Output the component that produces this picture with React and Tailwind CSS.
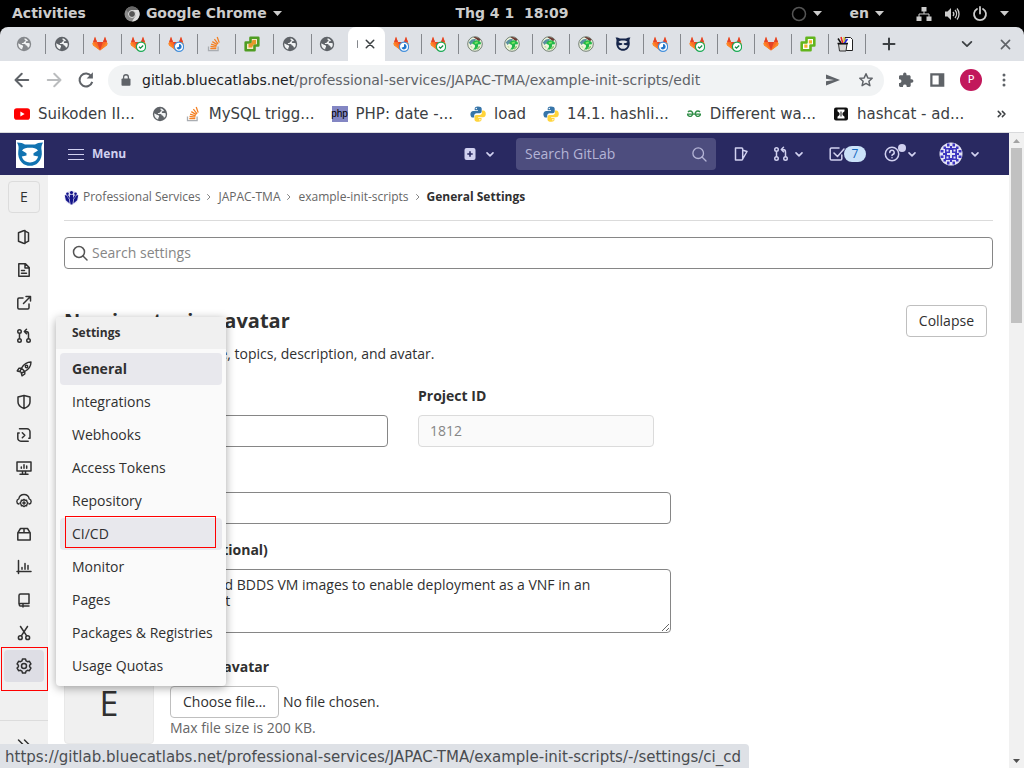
import React from "react";

const UI = "font-['Open_Sans','Noto_Sans',sans-serif]";
const SYS = "font-['DejaVu_Sans',sans-serif]";

/* ---------- small drawings ---------- */

function Svg({ size = 16, children, className = "", box = "0 0 16 16" }) {
  return (
    <svg width={size} height={size} viewBox={box} fill="none" className={`shrink-0 ${className}`} aria-hidden="true">
      {children}
    </svg>
  );
}

function Line({ d, children, size = 16, className = "", w = 1.5 }) {
  return (
    <Svg size={size} className={className}>
      <g stroke="currentColor" strokeWidth={w} strokeLinejoin="round" strokeLinecap="round">
        {d && <path d={d} />}
        {children}
      </g>
    </Svg>
  );
}

const Caret = () => (
  <svg width="9" height="5" viewBox="0 0 9 5" className="shrink-0" aria-hidden="true">
    <path d="M0 0h9L4.500 5z" fill="currentColor" />
  </svg>
);

const Chevron = () => <Line size={12} w={2.200} d="M4 6.500l4 4 4-4" />;

const Globe = ({ light }) => (
  <Svg>
    <circle cx="8" cy="8" r="7.200" fill={light ? "#85888c" : "#5f6368"} />
    <path
      d="M8.800 2.200c-.8.900-.4 1.700.6 1.700.3.800-.2 1.700-1.200 1.800-.2.900-.8 1.300-2 1.300l-.5.900h2.600c1.200 0 1.500 1 1.500 1.600 1.300 0 1.900.5 1.700 1.700l1.200.3A5.800 5.800 0 0 0 13.800 7.500l-1.300-.6-2.300.2c-.6-.7-.4-1.500.3-1.900l1.700-.3A5.800 5.800 0 0 0 8.800 2.200z M2.300 7.200l2.600 1.500c1.200.3 2.200.6 2.200 1.900 0 .9-.8 1-.8 1.900l-.2.900A5.800 5.800 0 0 1 2.300 7.200z"
      fill="#f1f3f4"
    />
  </Svg>
);

const Fox = () => (
  <>
    <path d="M8 14.500 1 9.300.6 7.500 3 .8l2 5.200h6l2-5.200 2.400 6.700-.4 1.800z" fill="#fc6d26" />
    <path d="M8 14.500 5 6h6z" fill="#e24329" />
    <path d="M8 14.500 1 9.300l-.4-1.800L1.200 6z" fill="#fc8a26" />
    <path d="M8 14.500l7-5.200.4-1.800L14.800 6z" fill="#fc8a26" />
    <path d="M3 .8 5 6H1.200zM13 .8l2 5.200h-4z" fill="#e24329" />
  </>
);

const FoxIcon = () => <Svg><Fox /></Svg>;
const FoxPassed = () => (
  <Svg>
    <Fox />
    <circle cx="11" cy="10.700" r="4.600" fill="#fff" stroke="#1aaa55" strokeWidth="1.200" />
    <path d="M9 10.700l1.500 1.500L13.200 9.500" stroke="#168f48" strokeWidth="1.300" />
  </Svg>
);
const FoxRunning = () => (
  <Svg>
    <Fox />
    <circle cx="11" cy="10.700" r="4.600" fill="#fff" stroke="#428fdc" strokeWidth="1.200" />
    <path d="M11 8a2.700 2.700 0 1 1-2.500 3.800L11 10.700z" fill="#1f75cb" />
  </Svg>
);
const StackIcon = () => (
  <Svg>
    <path d="M2.500 10.500v4.200h9.600v-4.200" stroke="#a9adb2" strokeWidth="1.300" />
    <path d="M4.300 12.600h6M4.500 10.500l5.900.7M5.100 8.200l5.600 1.700M6.300 5.600l5 3M8.400 3.200l3.700 4.600M11.200 1l2 5.600" stroke="#f48024" strokeWidth="1.300" />
  </Svg>
);
const GreenRing = ({ dark }) => (
  <Svg>
    <path
      d="M6.500 1.700h7.800v7.800h-3.800v4.800H1.700V6.500h4.800z"
      fill={dark ? "#f4e8c8" : "#fff"}
      stroke={dark ? "#4f9d22" : "#62b51c"}
      strokeWidth="2.600"
      strokeLinejoin="round"
    />
    {dark ? (
      <path d="M8.500 4H12v4L9.500 8.500 8 11.500H4.500V8l3-1z" fill="#e8962a" />
    ) : (
      <path d="M8.800 4.300H12v3.200H8.800zM4.300 8.500h3.200v3.200H4.300z" fill="#f7b32b" />
    )}
  </Svg>
);
const Dragon = () => (
  <Svg>
    <circle cx="8" cy="8" r="7.300" fill="#eef4dc" stroke="#68756a" strokeWidth=".9" />
    <path d="M1.800 6.500C4 3.500 6 2.500 9 3.200L7.500 5.500 5 7.500 3.500 9z" fill="#5c8fa0" />
    <path d="M6.500 1.200c2.500-.6 5.300.3 7 2.600L12 5.200 9 3z" fill="#6b3a34" />
    <path d="M5 7.500c1.500-2.500 3.500-3.700 6-3s3.200 2.200 2.900 3.700l-2.900.3c.5 2-.3 3.700-2.200 4.900l-3 .1c2-1.300 2.700-3 2-4.500z" fill="#22b84a" />
    <path d="M7.500 6.400l3-.9.5 1.800-3 .8z" fill="#7ee65f" />
    <path d="M9.800 11.500l3.500-2-.8 2.500-2.500 1.800z" fill="#8ac870" />
    <path d="M3 10.500l2-.5.5 2.500z" fill="#c6dba0" />
  </Svg>
);

const CAT_HEAD = "M1 2.500c4 0 6 .8 8 2h10c2-1.200 4-2 8-2-1.800 3.200-2 5-1.300 8.500.6 4.500-.6 8.500-3.700 11.700-4.200 4.200-11.800 4.200-16 0C2.900 19.500 1.700 15.500 2.300 11 3 7.500 2.800 5.700 1 2.500z";
const CAT_FACE = "M6 10.500C7.800 8.200 10.500 7.800 14 7.800s6.200.4 8 2.700l-4.500 2.700v2.400l4.700 1C20.700 20.700 18 22.500 14 22.500s-6.700-1.800-8.200-5.900l4.700-1v-2.400z";

const CatDark = () => (
  <Svg box="0 0 28 28">
    <path d={CAT_HEAD} fill="#16254a" />
    <path d={CAT_FACE} fill="#dee1e6" />
    <path d="M8 12.500h12v3H8z" fill="#16254a" />
    <path d="M12.500 11h3v6h-3z" fill="#dee1e6" />
  </Svg>
);
const PaintBucket = () => (
  <Svg>
    <path d="M8 1.500h5.500l2 2v11H8z" fill="#fff" stroke="#222" />
    <path d="M1.500 8h8.500l-1 7H2.500z" fill="#d6d6d6" stroke="#333" />
    <path d="M.5 7.500h10.500" stroke="#111" strokeWidth="1.500" />
    <path d="M1 2.500l3 4.500" stroke="#111" strokeWidth="1.500" />
    <path d="M4 1l1.700 6" stroke="#e22" strokeWidth="1.500" />
    <path d="M10.500 3L7.500 7" stroke="#22d" strokeWidth="1.500" />
    <path d="M7 1v5" stroke="#e8c71c" strokeWidth="1.300" />
  </Svg>
);
const Python = () => {
  const half = "M7.900.5C5.200.5 4.700 1.600 4.700 2.800v1.500H8v.6H3.200C1.500 4.900.4 6.200.4 8.200s1 3.400 2.500 3.400h1.300V9.700c0-1.300 1-2.400 2.400-2.400h3.200c1.100 0 1.900-.9 1.900-2V2.800C11.700 1.300 10.300.5 7.900.5z";
  return (
    <Svg>
      <path d={half} fill="#3775a9" />
      <path d={half} fill="#ffd43b" transform="rotate(180 8.100 8.100)" />
      <circle cx="6.300" cy="2.500" r=".7" fill="#fff" />
      <circle cx="9.900" cy="13.700" r=".7" fill="#fff" />
    </Svg>
  );
};
const YouTube = () => (
  <Svg>
    <rect x="0" y="2.300" width="16" height="11.400" rx="2.800" fill="#f00" />
    <path d="M6.400 5.600v4.800L10.600 8z" fill="#fff" />
  </Svg>
);
const Php = () => (
  <span className="flex h-4 w-4 shrink-0 items-center justify-center bg-[#8386c3] font-['Liberation_Sans',sans-serif] text-[10px] leading-3 text-black">php</span>
);
const Geeks = () => (
  <Svg>
    <path d="M1 8.200h14M2 6a2.700 2.700 0 1 1-.5 2.500M14 6a2.700 2.700 0 1 0 .5 2.500" stroke="#2f8d46" strokeWidth="1.300" />
  </Svg>
);
const Hashcat = () => (
  <Svg>
    <rect x="1" y="1.500" width="14" height="13" rx="2" fill="#111" />
    <path d="M4.500 3.500h7v1.800L9.500 7v2l2 1.700v1.800h-7v-1.800L6.500 9V7l-2-1.700z" fill="#fff" />
    <path d="M8 5.500v5" stroke="#111" />
  </Svg>
);

/* ---------- desktop bar ---------- */

function DesktopBar() {
  return (
    <div className={`${SYS} grid h-[27px] shrink-0 grid-cols-[1fr_auto_1fr] items-center bg-black px-3 text-[14px] font-bold text-[#ccc]`}>
      <div className="flex items-center gap-[38px]">
        <button className="font-bold">Activities</button>
        <button className="flex items-center gap-1.5 font-bold">
          <Svg>
            <circle cx="8" cy="8" r="7.500" fill="#8b8b8b" />
            <path d="M8 4h6.500A7.500 7.500 0 0 1 8 15.500L11.500 10z" fill="#ddd" />
            <path d="M8 .5A7.500 7.500 0 0 1 14.500 4H8a4 4 0 0 0-3.700 2.500L2 3.800A7.500 7.500 0 0 1 8 .5z" fill="#666" />
            <circle cx="8" cy="8" r="3.500" fill="#555" stroke="#ddd" />
          </Svg>
          <span>Google Chrome</span>
          <Caret />
        </button>
      </div>
      <span>Thg 4 1 &nbsp;18:09</span>
      <div className="mr-[3px] flex items-center justify-end">
        <button aria-label="Recorder" className="flex items-center gap-1.5">
          <Svg><circle cx="8" cy="8" r="6.500" stroke="#555" strokeWidth="1.500" /></Svg>
          <Caret />
        </button>
        <button className="ml-7 flex items-center gap-1.5 font-bold">en <Caret /></button>
        <button aria-label="System" className="ml-8 flex items-center gap-3">
          <Svg>
            <path d="M5.500 1h5v4.500h-5zM.5 10.500h5V15h-5zM10.500 10.500h5V15h-5z" fill="#ccc" />
            <path d="M8 5v3M3 11V8h10v3" stroke="#ccc" />
          </Svg>
          <Svg>
            <path d="M1 5.500h2.500L7 2v12l-3.500-3.500H1z" fill="#ccc" />
            <path d="M9 6a3 3 0 0 1 0 4M11 4a6 6 0 0 1 0 8M13 2.500a8.500 8.500 0 0 1 0 11" stroke="#ccc" strokeWidth="1.300" />
          </Svg>
          <Svg>
            <path d="M5 3a6 6 0 1 0 6 0M8 1v6.500" stroke="#ccc" strokeWidth="1.800" strokeLinecap="round" />
          </Svg>
          <Caret />
        </button>
      </div>
    </div>
  );
}

/* ---------- browser chrome ---------- */

const leftTabs = [<Globe light />, <Globe />, <FoxIcon />, <FoxPassed />, <FoxRunning />, <StackIcon />, <GreenRing dark />, <Globe />];
const rightTabs = [
  <FoxRunning />, <FoxPassed />, <Dragon />, <Dragon />, <Dragon />, <Dragon />, <CatDark />,
  <FoxRunning />, <FoxPassed />, <FoxPassed />, <FoxIcon />, <GreenRing />, <PaintBucket />,
];

function TabStrip() {
  return (
    <div className="shrink-0 bg-black">
      <div className="flex h-[34px] items-center rounded-t-lg bg-[#dee1e6] pl-2 text-[#3c4043]">
        {leftTabs.map((icon, i) => (
          <button key={i} aria-label="Tab" className="flex h-5 w-[38px] shrink-0 items-center border-r border-[#85888d] pl-2">
            {icon}
          </button>
        ))}
        <button aria-label="Tab" className="flex h-5 w-9 shrink-0 items-center pl-[7px]"><Globe /></button>
        <div className="flex h-[34px] w-[37px] shrink-0 items-center rounded-t-lg bg-white pl-[9px]">
          <span className="h-2 w-px rounded bg-[#85888d]" />
          <button aria-label="Close tab" className="ml-1.5"><Line size={12} w={2} d="M3 3l10 10M13 3 3 13" /></button>
        </div>
        {rightTabs.map((icon, i) => (
          <button
            key={i}
            aria-label="Tab"
            className="flex h-5 w-[37px] shrink-0 items-center border-r border-[#85888d] pl-2"
          >
            {icon}
          </button>
        ))}
        <button aria-label="New tab" className="ml-[15px]"><Line size={16} w={2} d="M8 2.500v11M2.500 8h11" /></button>
        <button aria-label="Search tabs" className="ml-auto"><Line size={14} w={2} d="M3 5.500l5 5 5-5" /></button>
        <button aria-label="Close window" className="ml-[25px] mr-3 text-[#5f6368]"><Line size={13} w={2} d="M3 3l10 10M13 3 3 13" /></button>
      </div>
    </div>
  );
}

function Toolbar() {
  return (
    <div className={`${SYS} flex h-[38px] shrink-0 items-center bg-white px-3 text-[#5f6368]`}>
      <div className="flex items-center gap-3">
        <button aria-label="Back"><Line size={20} w={1.6} d="M13 8H2.800M7.800 3 2.800 8l5 5" /></button>
        <button aria-label="Forward" className="text-[#babcbe]"><Line size={20} w={1.6} d="M3 8h10.200M8.200 3l5 5-5 5" /></button>
        <button aria-label="Reload">
          <Svg size={20}>
            <path d="M12.300 5A5.200 5.200 0 1 0 13 9.500" stroke="currentColor" strokeWidth="1.600" />
            <path d="M13.500 1.800v5h-5z" fill="currentColor" />
          </Svg>
        </button>
      </div>
      <div className="ml-3 flex h-[31px] flex-1 items-center rounded-full bg-[#f1f3f4] pl-3">
        <Svg size={12}>
          <rect x="2" y="6" width="12" height="9.500" rx="1.200" fill="currentColor" />
          <path d="M4.800 7V4.200a3.200 3.200 0 0 1 6.400 0V7" stroke="currentColor" strokeWidth="1.700" />
        </Svg>
        <div className="ml-2.5 flex-1 truncate text-[14px]">
          <span className="text-[#202124]">gitlab.bluecatlabs.net</span>
          <span>/professional-services/JAPAC-TMA/example-init-scripts/edit</span>
        </div>
        <button aria-label="Share"><Svg><path d="M1 2.500l14 5.500-14 5.500V9.300L9 8 1 6.700z" fill="currentColor" /></Svg></button>
        <button aria-label="Bookmark" className="ml-[17px] mr-2.5"><Line w={1.500} d="M8 1.800l1.800 4.100 4.400.4-3.300 3 1 4.400L8 11.400l-3.900 2.300 1-4.400-3.300-3 4.400-.4z" /></button>
      </div>
      <div className="ml-[14px] flex items-center gap-3.5">
        <button aria-label="Extensions">
          <Svg>
            <path d="M13.600 7.300h-1V4.600c0-.8-.6-1.400-1.400-1.400H8.500v-1a1.700 1.700 0 0 0-3.400 0v1H2.400C1.600 3.200 1 3.800 1 4.600v2.600h1a1.900 1.900 0 0 1 0 3.700H1v2.700c0 .7.600 1.400 1.400 1.400H5v-1a1.900 1.900 0 0 1 3.700 0v1h2.600c.8 0 1.400-.7 1.400-1.400v-2.800h1a1.700 1.700 0 0 0-.1-3.500z" fill="currentColor" />
          </Svg>
        </button>
        <button aria-label="Side panel">
          <Svg size={18}><path fillRule="evenodd" d="M2 2h12.500v12H2zM4 4v8h5.500V4z" fill="currentColor" /></Svg>
        </button>
        <button className="flex h-[22px] w-[22px] items-center justify-center rounded-full bg-[#c2185b] text-[11px] text-white">P</button>
        <button aria-label="More">
          <Svg>
            <g fill="currentColor"><circle cx="8" cy="3" r="1.500" /><circle cx="8" cy="8" r="1.500" /><circle cx="8" cy="13" r="1.500" /></g>
          </Svg>
        </button>
      </div>
    </div>
  );
}

const bookmarks = [
  [<YouTube />, "Suikoden II..."],
  [<Globe />, ""],
  [<StackIcon />, "MySQL trigg..."],
  [<Php />, "PHP: date -..."],
  [<Python />, "load"],
  [<Python />, "14.1. hashli..."],
  [<Geeks />, "Different wa..."],
  [<Hashcat />, "hashcat - ad..."],
];

function Bookmarks() {
  return (
    <nav className={`${SYS} flex h-[34px] shrink-0 items-center gap-[17px] border-b border-[#d9dadc] bg-white pb-[3px] pl-[14px] pr-4 text-[15px] text-[#3c4043]`}>
      {bookmarks.map(([icon, text], i) => (
        <a key={i} href="#" aria-label={text || "Bookmark"} className="flex items-center gap-2 whitespace-nowrap">
          {icon}
          {text && <span>{text}</span>}
        </a>
      ))}
      <button aria-label="More bookmarks" className="ml-auto"><Line size={12} w={2} d="M3 4.500l3.500 3.500L3 11.500M8.500 4.500L12 8l-3.500 3.500" /></button>
    </nav>
  );
}

/* ---------- page header ---------- */

const MergeRequest = () => (
  <Line>
    <circle cx="3.500" cy="3.500" r="1.750" />
    <circle cx="3.500" cy="12.500" r="1.750" />
    <circle cx="12.500" cy="12.500" r="1.750" />
    <path d="M3.500 5.500v5M12.500 10.500V6A2.500 2.500 0 0 0 10 3.500H8.500M10.500 1.300 8.300 3.500l2.200 2.200" />
  </Line>
);

function Identicon() {
  return (
    <Svg size={24} box="0 0 24 24">
      <circle cx="12" cy="12" r="11.500" fill="#e4e3f5" />
      <g fill="#3d35c0">
        <path d="M8 1.500h2.500v3H8zM13.500 1.500H16v3h-2.500zM8 19.500h2.500v3H8zM13.500 19.500H16v3h-2.500zM1.500 8h3v2.500h-3zM1.500 13.500h3V16h-3zM19.500 8h3v2.500h-3zM19.500 13.500h3V16h-3zM4.500 4.500H7V7H4.500zM17 4.500h2.500V7H17zM4.500 17H7v2.500H4.500zM17 17h2.500v2.500H17z" />
        <path fillRule="evenodd" d="M6 6h12v12H6zM11 8v3H8v2h3v3h2v-3h3v-2h-3V8zM7.500 7.500v2h2v-2zM14.500 7.500v2h2v-2zM7.500 14.500v2h2v-2zM14.500 14.500v2h2v-2z" />
        <path d="M11 4h2v2h-2zM11 18h2v2h-2zM4 11h2v2H4zM18 11h2v2h-2z" />
      </g>
    </Svg>
  );
}

function Header() {
  return (
    <header className="flex h-[42px] shrink-0 items-center bg-[#292961] pl-4 pr-7 text-[#d1d1f0]">
      <a href="#" aria-label="Home">
        <Svg size={28} box="0 0 28 28">
          <path d="M0 0h28v28H0z" fill="#fff" />
          <path d={CAT_HEAD} fill="#1173b1" />
          <path d={CAT_FACE} fill="#fff" />
        </Svg>
      </a>
      <button className="ml-6 flex items-center gap-2 text-[12px] font-bold">
        <Svg><path d="M0 3.500h16M0 8.500h16M0 13.500h16" stroke="currentColor" strokeWidth="1.200" /></Svg>
        Menu
      </button>
      <div className="ml-auto flex items-center">
        <button aria-label="Create new" className="flex items-center gap-1.5">
          <Svg>
            <rect x="2.500" y="2" width="11" height="12" rx="2" fill="currentColor" />
            <path d="M8 5.300v5.400M5.300 8h5.400" stroke="#292961" strokeWidth="1.600" />
          </Svg>
          <Chevron />
        </button>
        <label className="ml-5 flex h-8 w-[200px] items-center rounded bg-[#4d4d7e] px-[9px]">
          <input aria-label="Search GitLab" placeholder="Search GitLab" className="min-w-0 flex-1 bg-transparent pb-0.5 text-[14px] outline-none placeholder:text-[#b4b4d6]" />
          <Line w={1.300} className="text-[#b4b4d6]" d="M11 11l4 4"><circle cx="7.200" cy="7.200" r="5.300" /></Line>
        </label>
        <button aria-label="Issues" className="ml-[17px]">
          <Line d="M2.500 2h6.200a1 1 0 0 1 1 1v10a1 1 0 0 1-1 1H2.500zM10 4.300l4 1.200-4 7" />
        </button>
        <button aria-label="Merge requests" className="ml-6 flex items-center gap-1"><MergeRequest /><Chevron /></button>
        <button aria-label="To-Do List" className="ml-6 flex items-center">
          <Line d="M10 2H2.500a1.300 1.300 0 0 0-1.300 1.300v9.400A1.300 1.300 0 0 0 2.500 14h9a1.300 1.300 0 0 0 1.300-1.300V9M5 7l3.500 3.500L15 3" />
          <span className={`${UI} -ml-px h-4 w-[22px] rounded-full bg-[#cbe2f9] text-[12px] leading-4 text-[#1068bf]`}>7</span>
        </button>
        <button aria-label="Help" className="relative ml-[18px] flex items-center gap-1.5">
          <Line>
            <circle cx="8" cy="8" r="6.700" />
            <path d="M5.800 6.500A2.200 2.200 0 1 1 8.800 8.500C8.200 8.800 8 9 8 9.500M8 11.700v.1" />
          </Line>
          <Chevron />
          <span className="absolute -top-0.5 left-[14px] h-2 w-2 rounded-full bg-[#d1d1f0]" />
        </button>
        <button aria-label="Profile" className="ml-[21px] flex items-center gap-1.5"><Identicon /><Chevron /></button>
      </div>
    </header>
  );
}

/* ---------- sidebar ---------- */

const Gear = "M6.500 1h3l.6 1.900 1.400.8 1.900-.4 1.500 2.600-1.300 1.400v1.400l1.300 1.400-1.500 2.600-1.900-.4-1.400.8-.6 1.900h-3l-.6-1.900-1.400-.8-1.900.4-1.500-2.600 1.300-1.400V7.300L1.100 5.900l1.500-2.600 1.900.4 1.400-.8z";

const sideItems = [
  ["Project", <Line d="M2.500 3.800 7.500 1.800l1.500-.3v13l-1.500-.3L2.500 12.200zM9.200 2.200l3.300 1.600v8.400l-3.300 1.600" />],
  ["Repository info", <Line d="M2.800 1.800h6.700l3.700 3.700v8.700H2.800zM9 2v4h4M5.500 8.500h3M5.500 11.200h5" />],
  ["External", <Line d="M7 3H3a1.200 1.200 0 0 0-1.200 1.200v8.600A1.200 1.200 0 0 0 3 14h8.800a1.200 1.200 0 0 0 1.200-1.200V9M10 1.500h4.500V6M14.200 1.800 7.500 8.500" />],
  ["Merge requests", <MergeRequest />],
  ["CI/CD", <Line w={1.400} d="M5.500 7.200C7.500 3.700 10.500 1 15 1c0 4.500-2.700 7.500-6.200 9.500zM5.500 7.200H3L1.200 10l3 .8M8.800 10.500V13L6 14.800l-.8-3M5.500 7.200 4 10.300 5.700 12l3.100-1.500"><circle cx="10.500" cy="5.500" r="1.200" /></Line>],
  ["Security", <Line d="M8 1.500 14 3v5c0 3.200-2.700 5.300-6 6.500-3.300-1.200-6-3.300-6-6.500V3zM8 1.500v13" />],
  ["Deployments", <Line d="M3.500 1.800h7.500a3 3 0 0 1 3 3v6.500M1.800 6v5.200a3 3 0 0 0 3 3h7.400M1.800 6h1.400M12.800 11.300H14M6.300 5.700 8.800 8.200l-2.500 2.500" />],
  ["Monitor", <Line d="M1 2h14v9H1zM6.500 11.500v2.500M9.500 11.500v2.500M4 14.200h8M5.300 7v1.300M8 4.800v3.500M10.700 6v2.300" />],
  ["Infrastructure", <Line w={1.400} d="M2.800 11A2.700 2.700 0 0 1 2.800 5.800 5.300 5.300 0 0 1 13.200 5.800a2.700 2.700 0 0 1 0 5.200M8 6.400l1.100.9 1.500-.1.300 1.400 1 1.400-1 1.400-.3 1.400-1.500-.1L8 13.600l-1.100-.9-1.500.1-.3-1.400-1-1.400 1-1.400.3-1.400 1.500.1z"><circle cx="8" cy="10" r="1" /></Line>],
  ["Packages", <Line d="M1.800 6.800h12.400V14H1.800zM1.800 6.800 4.500 2.500h7l2.700 4.300M8 2.500v4.300" />],
  ["Analytics", <Line d="M2.500 1.500v13M1 12.500h14M6 8.500v1.700M9 4.500v5.700M12 6.500v3.700" />],
  ["Wiki", <Line d="M3 12V3.500A1.500 1.500 0 0 1 4.500 2H13v9.500H4.500a1.250 1.250 0 0 0 0 2.500H13M7 12v3" />],
  ["Snippets", <Line d="M4.500 1.500 10.500 10.700M11.500 1.500 5.500 10.700"><circle cx="4.300" cy="12.700" r="1.900" /><circle cx="11.700" cy="12.700" r="1.900" /></Line>],
  ["Settings", <Line d={Gear}><circle cx="8" cy="8" r="2.500" /></Line>],
];

function Sidebar() {
  return (
    <aside className={`${UI} flex w-12 shrink-0 flex-col bg-[#f0f0f0] text-[#303030]`}>
      <a href="#" className="mx-2 mt-1.5 mb-[7px] flex h-8 shrink-0 items-center justify-center rounded border border-[#dcdcdc] pb-0.5 text-[14px]">E</a>
      {sideItems.map(([name, icon]) => {
        const active = name === "Settings";
        return (
          <a
            key={name}
            href="#"
            aria-label={name}
            className={`relative mx-1 mt-px flex h-8 shrink-0 items-center justify-center rounded ${active ? "bg-[#dedee5]" : ""}`}
          >
            {icon}
            {active && <span className="absolute -left-[3px] -right-1 -top-[3px] h-11 border border-[#f00]" />}
          </a>
        );
      })}
      <button aria-label="Expand sidebar" className="mt-auto flex h-12 shrink-0 items-center justify-center border-t border-[#dcdcdc]">
        <Line d="M2.500 3l5 5-5 5M8.500 3l5 5-5 5" />
      </button>
    </aside>
  );
}

const flyout = ["General", "Integrations", "Webhooks", "Access Tokens", "Repository", "CI/CD", "Monitor", "Pages", "Packages & Registries", "Usage Quotas"];

function SettingsMenu() {
  return (
    <div className="absolute left-14 top-[142px] w-[170px] rounded bg-[#fafafa] pb-1 text-[14px] text-[#303030] shadow-[0_2px_10px_rgba(0,0,0,0.35)]">
      <div className="flex h-8 items-center rounded-t bg-[#f0f0f0] px-4 text-[12px] font-bold">Settings</div>
      <div className="flex flex-col gap-px px-1 pt-1">
        {flyout.map((t) => (
          <a
            key={t}
            href="#"
            className={`relative flex h-8 items-center whitespace-nowrap rounded px-3 pb-0.5 ${t === "General" ? "bg-[#e8e8ed] font-bold" : ""} ${t === "CI/CD" ? "bg-[#e8e8ed]" : ""}`}
          >
            {t}
            {t === "CI/CD" && <span className="absolute -top-0.5 left-[5px] right-1.5 h-8 border border-[#f00]" />}
          </a>
        ))}
      </div>
    </div>
  );
}

/* ---------- content ---------- */

const Sep = () => <Line size={8} w={2} className="text-[#868686]" d="M5 3l5 5-5 5" />;
const field = "rounded border border-[#868686] px-3 text-[14px] text-[#303030]";

function Content() {
  return (
    <main className={`${UI} min-w-0 flex-1 overflow-hidden px-4 text-[14px] leading-5 text-[#303030]`}>
      <nav className="flex h-[46px] items-center gap-[5px] border-b border-[#dbdbdb] pb-px text-[12px] text-[#666]">
        <a href="#" className="flex items-center gap-1">
          <Svg size={15}>
            <circle cx="8" cy="8" r="7.500" fill="#e2e2f4" />
            <g fill="#14148a">
              <circle cx="8" cy="2.700" r="1.700" /><circle cx="3.700" cy="4" r="1.400" /><circle cx="12.300" cy="4" r="1.400" />
              <path d="M6.300 5h3.400v6L9 15.500H7L6.300 11zM.8 5.500l1.700.2 3 4.300.5 4.500-4-3.500zM15.200 5.500l-1.700.2-3 4.300-.5 4.500 4-3.500zM3 5.500h1.500L6 8v2zM13 5.500h-1.500L10 8v2z" />
            </g>
          </Svg>
          Professional Services
        </a>
        <Sep />
        <a href="#">JAPAC-TMA</a>
        <Sep />
        <a href="#">example-init-scripts</a>
        <Sep />
        <a href="#" className="font-bold text-[#303030]">General Settings</a>
      </nav>

      <label className="mt-4 flex h-8 items-center gap-1 rounded border border-[#868686] px-[7px]">
        <Line className="text-[#555]" d="M11 11l4 4"><circle cx="7" cy="7" r="5.500" /></Line>
        <input aria-label="Search settings" placeholder="Search settings" className="flex-1 outline-none placeholder:text-[#868686]" />
      </label>

      <section className="mt-9">
        <div className="flex h-8 items-center justify-between pr-1.5">
          <h2 className="text-[20px] font-bold">Naming, topics, avatar</h2>
          <button className="h-8 rounded border border-[#bfbfbf] px-3">Collapse</button>
        </div>
        <p className="mt-[7px]">Update the project name, topics, description, and avatar.</p>

        <div className="mt-[22px] flex gap-[30px]">
          <div className="flex w-[324px] flex-col gap-[9px]">
            <label htmlFor="name" className="font-bold">Project name</label>
            <input id="name" className={`${field} h-8`} />
          </div>
          <div className="flex w-[236px] flex-col gap-[9px]">
            <label htmlFor="pid" className="font-bold">Project ID</label>
            <input id="pid" readOnly defaultValue="1812" className="h-8 rounded border border-[#dbdbdb] bg-[#fafafa] px-[11px] pb-0.5 text-[#868686]" />
          </div>
        </div>

        <div className="mt-4 flex max-w-[607px] flex-col gap-[9px]">
          <label htmlFor="topics" className="font-bold">Topics</label>
          <input id="topics" className={`${field} h-8`} />
        </div>

        <div className="mt-4 flex max-w-[607px] flex-col gap-[9px]">
          <label htmlFor="desc" className="font-bold">Project description (optional)</label>
          <textarea
            id="desc"
            className={`${field} h-16 py-[7px] leading-4`}
            defaultValue={"Customize the BAM and BDDS VM images to enable deployment as a VNF in an\nOpenShift environment"}
          />
        </div>

        <div className="mt-[21px] flex gap-4">
          <div className="flex h-[90px] w-[90px] items-center justify-center rounded border border-[#e8e8e8] bg-[#f0f0f0] pt-2 text-[34px]">E</div>
          <div className="pt-[3px]">
            <div className="font-bold">Project avatar</div>
            <div className="mt-[9px] flex items-center gap-1">
              <button className="h-8 rounded border border-[#bfbfbf] bg-white px-3">Choose file…</button>
              <span>No file chosen.</span>
            </div>
            <p className="text-[#666]">Max file size is 200 KB.</p>
          </div>
        </div>
      </section>
    </main>
  );
}

function Scrollbar() {
  return (
    <div className="flex w-[15px] shrink-0 flex-col items-center bg-[#f1f1f1]" aria-hidden="true">
      <svg width="15" height="15" viewBox="0 0 15 15"><path d="M4 10h7L7.500 6z" fill="#a3a3a3" /></svg>
      <span className="h-[175px] w-[11px] bg-[#c1c1c1]" />
      <svg width="15" height="15" viewBox="0 0 15 15" className="mt-auto"><path d="M4 6h7l-3.500 4z" fill="#505050" /></svg>
    </div>
  );
}

export default function App() {
  return (
    <div className="relative flex h-screen flex-col overflow-hidden bg-white">
      <DesktopBar />
      <TabStrip />
      <Toolbar />
      <Bookmarks />
      <div className="flex min-h-0 flex-1">
        <div className={`${UI} flex min-w-0 flex-1 flex-col`}>
          <Header />
          <div className="relative flex min-h-0 flex-1">
            <Sidebar />
            <Content />
            <SettingsMenu />
          </div>
        </div>
        <Scrollbar />
      </div>
      <div className={`${SYS} absolute bottom-0 left-0 h-6 rounded-tr bg-[#dee1e6] pl-[5px] pr-2 pt-px text-[15px] leading-6 text-[#4a4d51]`}>
        https://gitlab.bluecatlabs.net/professional-services/JAPAC-TMA/example-init-scripts/-/settings/ci_cd
      </div>
    </div>
  );
}
